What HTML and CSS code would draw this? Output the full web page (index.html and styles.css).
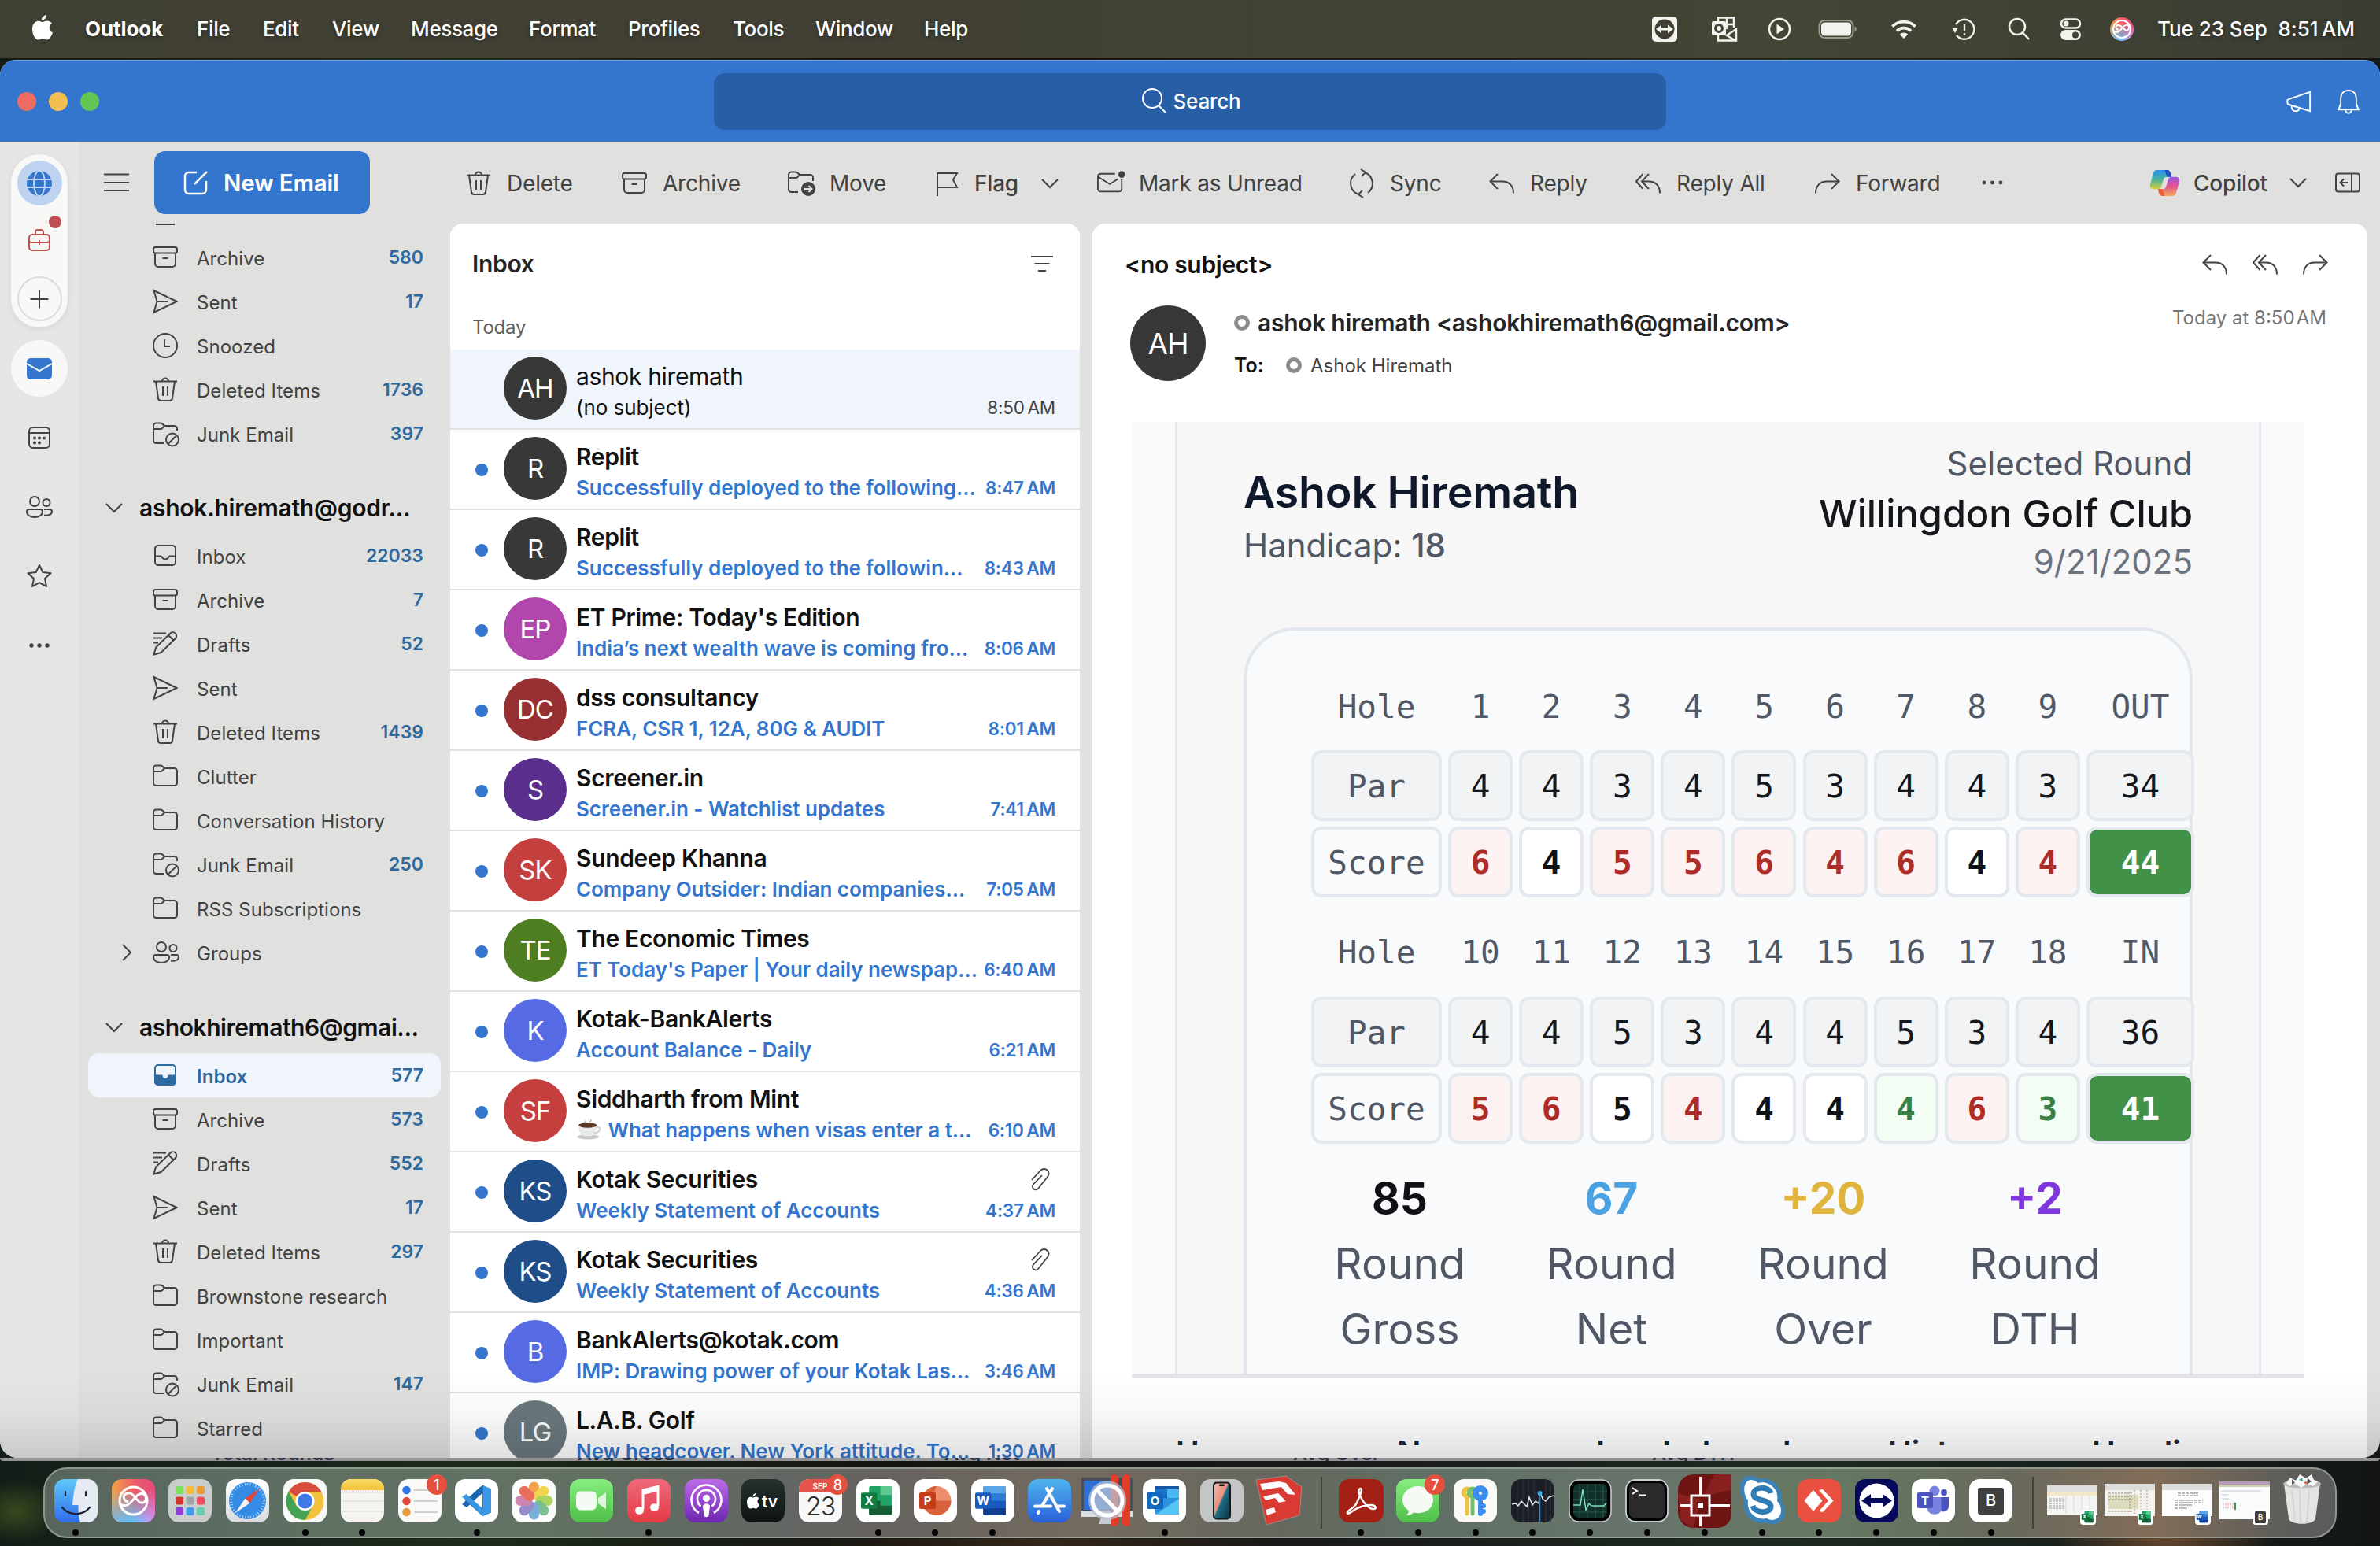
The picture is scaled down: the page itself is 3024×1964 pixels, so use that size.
FILE: index.html
```html
<!DOCTYPE html>
<html lang="en">
<head>
<meta charset="utf-8">
<title>Outlook</title>
<link rel="stylesheet" href="styles.css">
</head>
<body>
<svg class="sprite" width="0" height="0">
  <defs>
    <linearGradient id="gBlue" x1="0" y1="0" x2="0" y2="1"><stop offset="0" stop-color="#4fb5ef"/><stop offset="1" stop-color="#2a5fd8"/></linearGradient>
    <linearGradient id="gFinder" x1="0" y1="0" x2="0" y2="1"><stop offset="0" stop-color="#5fc8f7"/><stop offset="1" stop-color="#2f6df0"/></linearGradient>
    <linearGradient id="gGreen" x1="0" y1="0" x2="0" y2="1"><stop offset="0" stop-color="#86ee80"/><stop offset="1" stop-color="#4fbf48"/></linearGradient>
    <linearGradient id="gRed" x1="0" y1="0" x2="0" y2="1"><stop offset="0" stop-color="#ee6a7c"/><stop offset="1" stop-color="#e43a44"/></linearGradient>
    <linearGradient id="gPurple" x1="0" y1="0" x2="0" y2="1"><stop offset="0" stop-color="#bd6be8"/><stop offset="1" stop-color="#6d27b0"/></linearGradient>
    <linearGradient id="gDark" x1="0" y1="0" x2="0" y2="1"><stop offset="0" stop-color="#25312e"/><stop offset="1" stop-color="#0e1314"/></linearGradient>
    <linearGradient id="gYellow" x1="0" y1="0" x2="0" y2="1"><stop offset="0" stop-color="#f8dc6a"/><stop offset="1" stop-color="#f2c12e"/></linearGradient>
    <linearGradient id="gSilver" x1="0" y1="0" x2="0" y2="1"><stop offset="0" stop-color="#ffffff"/><stop offset="1" stop-color="#d8dade"/></linearGradient>
    <linearGradient id="gSiri" x1="0" y1="0" x2="1" y2="1"><stop offset="0" stop-color="#f0a23c"/><stop offset=".35" stop-color="#ea5a6c"/><stop offset=".6" stop-color="#d99ac0"/><stop offset=".8" stop-color="#79b7f4"/><stop offset="1" stop-color="#d58bf0"/></linearGradient>
    <linearGradient id="gSiriTop" x1="0" y1="0" x2="1" y2="0"><stop offset="0" stop-color="#f0a545"/><stop offset=".55" stop-color="#ec5a68"/><stop offset="1" stop-color="#e84a7c"/></linearGradient>
    <linearGradient id="gSiriBot" x1="0" y1="0" x2="1" y2="0"><stop offset="0" stop-color="#7fb4d8"/><stop offset=".5" stop-color="#62c0f4"/><stop offset="1" stop-color="#dd8ff6"/></linearGradient>
    <linearGradient id="gFade" x1="0" y1="0" x2="0" y2="1"><stop offset=".25" stop-color="#000"/><stop offset=".95" stop-color="#fff"/></linearGradient>
    <mask id="mFade" maskContentUnits="objectBoundingBox"><rect width="1" height="1" fill="url(#gFade)"/></mask>
    <linearGradient id="gPhone" x1="0" y1="0" x2="1" y2="1"><stop offset="0" stop-color="#f3b9a8"/><stop offset=".45" stop-color="#e88f7d"/><stop offset=".5" stop-color="#1d6f86"/><stop offset="1" stop-color="#0d3346"/></linearGradient>
    <linearGradient id="gCopA" x1="0" y1="0" x2="0" y2="1"><stop offset="0" stop-color="#2f8ff0"/><stop offset=".5" stop-color="#45b39a"/><stop offset="1" stop-color="#d8cf3c"/></linearGradient>
    <linearGradient id="gCopB" x1="0" y1="0" x2="0" y2="1"><stop offset="0" stop-color="#9a55e6"/><stop offset=".5" stop-color="#e2568a"/><stop offset="1" stop-color="#f5a85b"/></linearGradient>
  </defs>
  <symbol id="archive" viewBox="0 0 32 32"><rect x="1" y="3" width="30" height="7.500" rx="2.500"/><path d="M3 10.500V24a4 4 0 0 0 4 4h18a4 4 0 0 0 4-4V10.500M12.500 17h7"/></symbol>
  <symbol id="sent" viewBox="0 0 32 32"><path d="M1.500 2 30.500 16 1.500 30 5.500 16ZM5.500 16H19"/></symbol>
  <symbol id="clock" viewBox="0 0 32 32"><circle cx="16" cy="16" r="15"/><path d="M15 8v9h7"/></symbol>
  <symbol id="trash" viewBox="0 0 32 32"><path d="M1 5.500h30M12 5.500a4 4 0 0 1 8 0M4 5.500 7 27a3.500 3.500 0 0 0 3.500 3h11A3.500 3.500 0 0 0 25 27L28 5.500M13 12v12M19 12v12"/></symbol>
  <symbol id="folder" viewBox="0 0 32 32"><path d="M1 9.500V6a3.500 3.500 0 0 1 3.500-3.500H10a3 3 0 0 1 2 .8L15 6h12.500A3.500 3.500 0 0 1 31 9.500v15a3.500 3.500 0 0 1-3.500 3.500h-23A3.500 3.500 0 0 1 1 24.500ZM1 10h9a3 3 0 0 0 2-.8L15 6"/></symbol>
  <symbol id="junk" viewBox="0 0 34 34"><path d="M14 28H4.500A3.500 3.500 0 0 1 1 24.500V6a3.500 3.500 0 0 1 3.500-3.500H10a3 3 0 0 1 2 .8L15 6h12.500A3.500 3.500 0 0 1 31 9.500V12M1 10h9a3 3 0 0 0 2-.8L15 6"/><circle cx="25" cy="23.500" r="8"/><path d="m19.500 29 11-11"/></symbol>
  <symbol id="inbox" viewBox="0 0 32 32"><rect x="3" y="3" width="26" height="25" rx="4"/><path d="M3 16.500h7.500c.8 0 1 .5 1.300 1.200a4.600 4.600 0 0 0 8.400 0c.3-.7.500-1.200 1.300-1.200H29"/></symbol>
  <symbol id="inbox-fill" viewBox="0 0 32 32"><rect x="3" y="3" width="26" height="25" rx="4"/><path fill="currentColor" d="M3 16.500h8.500c.4 3 2 4.500 4.500 4.500s4.100-1.500 4.500-4.500H29V24a4 4 0 0 1-4 4H7a4 4 0 0 1-4-4Z"/></symbol>
  <symbol id="drafts" viewBox="0 0 32 32"><path d="M1 2.500h16M1 8.500h11M1 14.500h6M1.500 29.500 4 20.500 22.500 2.500a4.600 4.600 0 0 1 6.500 6.500L10.500 27ZM20 5l6.500 6.500"/></symbol>
  <symbol id="people" viewBox="0 0 34 32"><circle cx="11" cy="9" r="6"/><circle cx="26" cy="10.500" r="4.500"/><path d="M4 19h14a3 3 0 0 1 3 3c0 4-4 7-10 7S1 26 1 22a3 3 0 0 1 3-3ZM23 19h7a3 3 0 0 1 3 3c0 3.500-4.500 5.500-10 4.500"/></symbol>
  <symbol id="chev-d" viewBox="0 0 32 32"><path d="m6 11 10 10 10-10"/></symbol>
  <symbol id="chev-r" viewBox="0 0 32 32"><path d="m11 6 10 10-10 10"/></symbol>
  <symbol id="reply" viewBox="0 0 32 32"><path d="M11 4 1.500 13.500 11 23M1.500 13.500H17c9 0 14 6 14 15"/></symbol>
  <symbol id="replyall" viewBox="0 0 32 32"><path d="M9.500 4 1 13.500 9.500 23M17 4l-9 9.500 9 9.500M8 13.500h9c9 0 14 6 14 15"/></symbol>
  <symbol id="forward" viewBox="0 0 32 32"><path d="m21 4 9.500 9.500L21 23M30.500 13.500H15c-9 0-14 6-14 15"/></symbol>
  <symbol id="clip" viewBox="0 0 28 32"><path d="M3 17 14 5a6 6 0 0 1 9 8L11 28a4 4 0 0 1-6-5.500L16 11"/></symbol>
  <symbol id="globe" viewBox="0 0 32 32"><circle cx="16" cy="16" r="16" fill="#3476cd"/><g fill="none" stroke="#bdd3f0" stroke-width="2"><ellipse cx="16" cy="16" rx="7" ry="16"/><path d="M0 11h32M0 21h32"/></g></symbol>
  <symbol id="excel" viewBox="0 0 40 40"><rect x="10" y="2" width="28" height="36" rx="2" fill="#21a366"/><path d="M24 2h12a2 2 0 0 1 2 2v9H24Z" fill="#5cc78e"/><path d="M10 20h14v18H12a2 2 0 0 1-2-2ZM24 26h14v10a2 2 0 0 1-2 2H24Z" fill="#185c37"/><rect x="0" y="10" width="20" height="20" rx="2" fill="#107c41"/><text x="10" y="25.500" class="glyph">X</text></symbol>
  <symbol id="word" viewBox="0 0 40 40"><rect x="10" y="2" width="28" height="36" rx="2" fill="#2b7cd3"/><path d="M12 2h24a2 2 0 0 1 2 2v7H10V4a2 2 0 0 1 2-2Z" fill="#5aa4ea"/><path d="M10 29h28v7a2 2 0 0 1-2 2H12a2 2 0 0 1-2-2Z" fill="#103f91"/><path d="M10 20h28v9H10Z" fill="#185abd"/><rect x="0" y="10" width="20" height="20" rx="2" fill="#185abd"/><text x="10" y="25.500" class="glyph">W</text></symbol>
</svg>

<header class="menubar">
  <svg class="apple" viewBox="0 0 26 32"><path fill="#fff" d="M18 0c.3 3.600-3 7-6.200 6.800C11.500 3.600 14.700.4 18 0ZM12.800 9c1.600 0 3.400-1.600 6.200-1.600 2.400 0 4.700 1.300 6 3.300-4.800 3-4 9.800 1 11.800-1.500 4.600-4.400 9-7.500 9-2.200 0-2.900-1.300-5.400-1.300s-3.400 1.300-5.400 1.300C3.500 31.500 0 24.500 0 18 0 11.500 3.700 7.800 7.500 7.800 9.700 7.800 11.400 9 12.800 9Z"/></svg>
  <nav class="menus"><b>Outlook</b><span>File</span><span>Edit</span><span>View</span><span>Message</span><span>Format</span><span>Profiles</span><span>Tools</span><span>Window</span><span>Help</span></nav>
  <div class="status">
    <svg viewBox="0 0 32 32"><rect width="32" height="32" rx="5" fill="#f3f3ee"/><circle cx="16" cy="16" r="12.500" fill="#413f33"/><path fill="#f3f3ee" d="m5 16 7-5.500v4h8v-4l7 5.500-7 5.500v-4h-8v4Z"/></svg>
    <svg viewBox="0 0 32 32"><path fill="none" stroke="#f3f3ee" stroke-width="2.500" d="M8 6V1.500h20V14M19 1.500V16M10 10h18M8 24v6.500h23V16L19 24l12 7"/><rect y="6" width="18" height="18" rx="2" fill="#f3f3ee"/><circle cx="9" cy="15" r="4.500" fill="none" stroke="#413f33" stroke-width="3"/></svg>
    <svg viewBox="0 0 32 32"><circle cx="16" cy="16" r="13" fill="none" stroke="#f3f3ee" stroke-width="2.500"/><path fill="#f3f3ee" d="M12.500 9.500 22 16l-9.500 6.500Z"/></svg>
    <svg class="batt" viewBox="0 0 50 32"><rect x="1.500" y="5" width="43" height="22" rx="7" fill="none" stroke="#9a9a90" stroke-width="2"/><rect x="4" y="7.500" width="38" height="17" rx="4.500" fill="#f3f3ee"/><path d="M46.500 12.500c3 1 3 6 0 7Z" fill="#9a9a90"/></svg>
    <svg class="wifi" viewBox="0 0 36 32"><g fill="none" stroke="#f3f3ee" stroke-width="4"><path d="M2.500 12.500a22 22 0 0 1 31 0M8.500 18.500a13.500 13.500 0 0 1 19 0"/></g><path fill="#f3f3ee" d="M18 29l-5.500-6a7.800 7.800 0 0 1 11 0Z"/></svg>
    <svg viewBox="0 0 32 32"><path fill="none" stroke="#f3f3ee" stroke-width="2.300" d="M6 10A12.500 12.500 0 1 1 7 24M17 10v8.500M17 21v2.500"/><path fill="#f3f3ee" d="m1 14 8 0-4 7Z"/></svg>
    <svg viewBox="0 0 32 32"><g fill="none" stroke="#f3f3ee" stroke-width="2.500"><circle cx="14" cy="13" r="10"/><path d="m21 20.500 8 8.500"/></g></svg>
    <svg viewBox="0 0 32 32"><rect x="4" y="3.500" width="24" height="11" rx="5.500" fill="none" stroke="#f3f3ee" stroke-width="2.500"/><circle cx="10" cy="9" r="3.500" fill="#f3f3ee"/><rect x="3" y="17" width="26" height="13" rx="6.500" fill="#f3f3ee"/><circle cx="22" cy="23.500" r="4" fill="#413f33"/></svg>
    <svg viewBox="0 0 32 32"><circle cx="16" cy="16" r="15" fill="url(#gSiriTop)"/><circle cx="16" cy="16" r="15" fill="url(#gSiriBot)" mask="url(#mFade)"/><g fill="none" stroke="#fff" stroke-width="2"><circle cx="16" cy="16" r="11"/><path d="M6 19c5 3 8-1 11-5s7-4 8-1-2 6-5 4-5-7-9-6-3 5 1 6"/></g></svg>
  </div>
  <time>Tue 23 Sep&nbsp; 8:51&thinsp;AM</time>
</header>

<main class="window">
  <div class="titlebar">
    <div class="lights"><i></i><i></i><i></i></div>
    <div class="search"><svg viewBox="0 0 32 32"><circle cx="14" cy="13" r="12"/><path d="m22 22 9 9"/></svg>Search</div>
    <div class="tb-icons">
      <svg viewBox="0 0 34 32"><path d="M32 3v26L3 20a2 2 0 0 1-1.500-2v-3A2 2 0 0 1 3 13ZM7 21.500c0 5 2 7.500 5.500 7.500s5-2 5.500-4.500"/></svg>
      <svg viewBox="0 0 32 34"><path d="M16 2C9 2 5.500 7 5.500 13v7L2.500 28h27l-3-8v-7C26.500 7 23 2 16 2ZM12 28.500c0 5.500 8 5.500 8 0"/></svg>
    </div>
  </div>

  <aside class="rail">
    <div class="pill">
      <div class="acct on"><svg class="globe"><use href="#globe"/></svg></div>
      <div class="acct work"><svg class="ic" viewBox="0 0 32 32"><rect x="3" y="9" width="26" height="20" rx="4"/><path d="M11 9V6a3 3 0 0 1 3-3h4a3 3 0 0 1 3 3v3M3 16c0 2 1 3 3 3h20c2 0 3-1 3-3M16 16v6"/></svg><i></i></div>
      <div class="acct plus"><svg class="ic" viewBox="0 0 32 32"><path d="M16 4.500v23M4.500 16h23"/></svg></div>
    </div>
    <div class="app on"><svg class="mailic" viewBox="0 0 32 28"><rect width="32" height="27" rx="5" fill="#3476cd"/><path d="m0 7 16 9 16-9" fill="none" stroke="#f8f8f6" stroke-width="2"/></svg></div>
    <div class="app"><svg class="ic" viewBox="0 0 32 32"><rect x="3" y="3" width="26" height="26" rx="5"/><path d="M3 10h26"/><g class="solid"><circle cx="10" cy="16.500" r="2"/><circle cx="16" cy="16.500" r="2"/><circle cx="22" cy="16.500" r="2"/><circle cx="10" cy="22.500" r="2"/><circle cx="16" cy="22.500" r="2"/></g></svg></div>
    <div class="app"><svg class="ic ppl"><use href="#people"/></svg></div>
    <div class="app"><svg class="ic" viewBox="0 0 32 32"><path stroke-linejoin="round" d="m16 2 4.300 9 10.200 1.200-7.500 6.900 2 9.900-9-4.800L7 29l2-9.900-7.500-6.900L11.700 11Z"/></svg></div>
    <div class="app"><svg class="ic" viewBox="0 0 32 32"><g class="solid"><circle cx="6" cy="16" r="2.700"/><circle cx="16" cy="16" r="2.700"/><circle cx="26" cy="16" r="2.700"/></g></svg></div>
  </aside>

  <div class="toolbar">
    <svg class="ic" viewBox="0 0 32 32"><path d="M0 5.500h32M0 16h32M0 26h32"/></svg>
    <button class="new"><svg class="ic" viewBox="0 0 32 32"><path d="M17 3H7a5 5 0 0 0-5 5v17a5 5 0 0 0 5 5h17a5 5 0 0 0 5-5V14M14 18 30 2"/></svg>New Email</button>
    <span class="cmd"><svg class="ic"><use href="#trash"/></svg><em>Delete</em></span>
    <span class="cmd"><svg class="ic"><use href="#archive"/></svg><em>Archive</em></span>
    <span class="cmd"><svg class="ic wide" viewBox="0 0 36 34"><path d="M13 28H4.500A3.500 3.500 0 0 1 1 24.500V6a3.500 3.500 0 0 1 3.500-3.500H10a3 3 0 0 1 2 .8L15 6h13.500A3.500 3.500 0 0 1 32 9.500V14M1 10h9a3 3 0 0 0 2-.8L15 6"/><circle class="solid" cx="26" cy="24" r="9"/><path stroke="#e0e0df" d="M21 24h9M26.500 20l4 4-4 4"/></svg><em>Move</em></span>
    <span class="cmd flag"><svg class="ic" viewBox="0 0 32 32"><path d="M2 32V3h25l-5 8.500 5 9.500H2"/></svg><em>Flag</em><svg class="ic chev"><use href="#chev-d"/></svg></span>
    <span class="cmd"><svg class="ic wide" viewBox="0 0 38 34"><path d="M24 4H5a4 4 0 0 0-4 4v16a4 4 0 0 0 4 4h24a4 4 0 0 0 4-4V11M1 8l16 10L28 11"/><circle class="solid" cx="33" cy="5" r="4.500"/></svg><em>Mark as Unread</em></span>
    <span class="cmd"><svg class="ic sync" viewBox="0 0 32 38"><path d="M20 5a15 15 0 0 1 4 26M12 33A15 15 0 0 1 8 7M15 1l6 4-5 5M17 28l-5 5 6 4"/></svg><em>Sync</em></span>
    <span class="cmd"><svg class="ic"><use href="#reply"/></svg><em>Reply</em></span>
    <span class="cmd"><svg class="ic"><use href="#replyall"/></svg><em>Reply All</em></span>
    <span class="cmd"><svg class="ic"><use href="#forward"/></svg><em>Forward</em></span>
    <svg class="ic" viewBox="0 0 32 32"><g class="solid"><circle cx="5" cy="16" r="2.400"/><circle cx="15.500" cy="16" r="2.400"/><circle cx="26" cy="16" r="2.400"/></g></svg>
    <span class="cmd cop"><svg class="copilot" viewBox="0 0 38 34"><path d="M9 0h12c3 0 4.500 2 5.500 6l1 3h-6c-3 0-4 2-5 6l-2 7c-.8 2-2 3-4.500 3H5c-4 0-6-2.500-5-6.500L4 4C5 1 6.500 0 9 0Z" fill="url(#gCopA)"/><path d="M19 0h3c3 0 4 2 5 5l1 4h-6Z" fill="#1d4fc0"/><path d="M29 34H17c-3 0-4.500-2-5.500-6l-1-3h6c3 0 4-2 5-6l2-7c.8-2 2-3 4.500-3H33c4 0 6 2.500 5 6.500L34 30c-1 3-2.500 4-5 4Z" fill="url(#gCopB)"/><path d="M19 34h-3c-3 0-4-2-5-5l-1-4h6Z" fill="#e8613c"/></svg><em>Copilot</em></span>
    <svg class="ic"><use href="#chev-d"/></svg>
    <svg class="ic" viewBox="0 0 32 32"><rect x="1" y="4.500" width="30" height="23" rx="3"/><path d="M21 4.500v23M16 16H7M11 11.500 6.500 16l4.500 4.500"/></svg>
  </div>

  <nav class="folders">
    <div class="cut"></div>
    <a><svg class="ic"><use href="#archive"/></svg><span>Archive</span><b>580</b></a>
    <a><svg class="ic"><use href="#sent"/></svg><span>Sent</span><b>17</b></a>
    <a><svg class="ic"><use href="#clock"/></svg><span>Snoozed</span></a>
    <a><svg class="ic"><use href="#trash"/></svg><span>Deleted Items</span><b>1736</b></a>
    <a><svg class="ic j"><use href="#junk"/></svg><span>Junk Email</span><b>397</b></a>
    <h3><svg class="ic"><use href="#chev-d"/></svg>ashok.hiremath@godr...</h3>
    <a><svg class="ic"><use href="#inbox"/></svg><span>Inbox</span><b>22033</b></a>
    <a><svg class="ic"><use href="#archive"/></svg><span>Archive</span><b>7</b></a>
    <a><svg class="ic"><use href="#drafts"/></svg><span>Drafts</span><b>52</b></a>
    <a><svg class="ic"><use href="#sent"/></svg><span>Sent</span></a>
    <a><svg class="ic"><use href="#trash"/></svg><span>Deleted Items</span><b>1439</b></a>
    <a><svg class="ic"><use href="#folder"/></svg><span>Clutter</span></a>
    <a><svg class="ic"><use href="#folder"/></svg><span>Conversation History</span></a>
    <a><svg class="ic j"><use href="#junk"/></svg><span>Junk Email</span><b>250</b></a>
    <a><svg class="ic"><use href="#folder"/></svg><span>RSS Subscriptions</span></a>
    <a class="group"><svg class="ic"><use href="#chev-r"/></svg><svg class="ic"><use href="#people"/></svg><span>Groups</span></a>
    <h3 class="second"><svg class="ic"><use href="#chev-d"/></svg>ashokhiremath6@gmai...</h3>
    <a class="sel"><svg class="ic"><use href="#inbox-fill"/></svg><span>Inbox</span><b>577</b></a>
    <a><svg class="ic"><use href="#archive"/></svg><span>Archive</span><b>573</b></a>
    <a><svg class="ic"><use href="#drafts"/></svg><span>Drafts</span><b>552</b></a>
    <a><svg class="ic"><use href="#sent"/></svg><span>Sent</span><b>17</b></a>
    <a><svg class="ic"><use href="#trash"/></svg><span>Deleted Items</span><b>297</b></a>
    <a><svg class="ic"><use href="#folder"/></svg><span>Brownstone research</span></a>
    <a><svg class="ic"><use href="#folder"/></svg><span>Important</span></a>
    <a><svg class="ic j"><use href="#junk"/></svg><span>Junk Email</span><b>147</b></a>
    <a><svg class="ic"><use href="#folder"/></svg><span>Starred</span></a>
  </nav>

  <section class="list">
    <header><h2>Inbox</h2><svg class="ic" viewBox="0 0 32 32"><path d="M2 7h28M6.500 16h19M11 25h10"/></svg></header>
    <p class="day">Today</p>
    <article class="read"><div class="av dark">AH</div><h4>ashok hiremath</h4><p>(no subject)</p><time>8:50&thinsp;AM</time></article>
    <article><i></i><div class="av dark">R</div><h4>Replit</h4><p>Successfully deployed to the following...</p><time>8:47&thinsp;AM</time></article>
    <article><i></i><div class="av dark">R</div><h4>Replit</h4><p>Successfully deployed to the followin...</p><time>8:43&thinsp;AM</time></article>
    <article><i></i><div class="av pink">EP</div><h4>ET Prime: Today's Edition</h4><p>India’s next wealth wave is coming fro...</p><time>8:06&thinsp;AM</time></article>
    <article><i></i><div class="av maroon">DC</div><h4>dss consultancy</h4><p>FCRA, CSR 1, 12A, 80G &amp; AUDIT</p><time>8:01&thinsp;AM</time></article>
    <article><i></i><div class="av violet">S</div><h4>Screener.in</h4><p>Screener.in - Watchlist updates</p><time>7:41&thinsp;AM</time></article>
    <article><i></i><div class="av red">SK</div><h4>Sundeep Khanna</h4><p>Company Outsider: Indian companies...</p><time>7:05&thinsp;AM</time></article>
    <article><i></i><div class="av green">TE</div><h4>The Economic Times</h4><p>ET Today's Paper | Your daily newspap...</p><time>6:40&thinsp;AM</time></article>
    <article><i></i><div class="av indigo">K</div><h4>Kotak-BankAlerts</h4><p>Account Balance - Daily</p><time>6:21&thinsp;AM</time></article>
    <article><i></i><div class="av red">SF</div><h4>Siddharth from Mint</h4><p><svg class="cup" viewBox="0 0 36 28"><ellipse cx="16" cy="24" rx="15" ry="3.500" fill="#c9c9c9"/><path d="M3 8h25c0 9-4 15-9 15h-7C7 23 3 17 3 8Z" fill="#e9e9e9"/><path d="M27 11c7-2 8 6-3 8" fill="none" stroke="#d5d5d5" stroke-width="2.500"/><ellipse cx="15.500" cy="8" rx="12.500" ry="3.500" fill="#5b3a26"/><path d="M11 5c0-2 3-2 2-5M18 5c0-2 3-2 2-5" fill="none" stroke="#b5b5b5" stroke-width="1.500"/></svg> What happens when visas enter a t...</p><time>6:10&thinsp;AM</time></article>
    <article><i></i><div class="av navy">KS</div><h4>Kotak Securities</h4><svg class="ic clip"><use href="#clip"/></svg><p>Weekly Statement of Accounts</p><time>4:37&thinsp;AM</time></article>
    <article><i></i><div class="av navy">KS</div><h4>Kotak Securities</h4><svg class="ic clip"><use href="#clip"/></svg><p>Weekly Statement of Accounts</p><time>4:36&thinsp;AM</time></article>
    <article><i></i><div class="av indigo">B</div><h4>BankAlerts@kotak.com</h4><p>IMP: Drawing power of your Kotak Las...</p><time>3:46&thinsp;AM</time></article>
    <article><i></i><div class="av grey">LG</div><h4>L.A.B. Golf</h4><p>New headcover. New York attitude. To...</p><time>1:30&thinsp;AM</time></article>
  </section>

  <section class="reader">
    <header class="subj"><h2>&lt;no subject&gt;</h2><svg class="ic"><use href="#reply"/></svg><svg class="ic"><use href="#replyall"/></svg><svg class="ic"><use href="#forward"/></svg></header>
    <div class="meta">
      <div class="av dark big">AH</div>
      <div class="who">
        <div class="from"><i></i>ashok hiremath &lt;ashokhiremath6@gmail.com&gt;</div>
        <div class="to"><b>To:</b><i></i>Ashok Hiremath</div>
      </div>
      <time>Today at 8:50&hairsp;AM</time>
    </div>
    <div class="shot">
      <div class="page">
        <div class="player">
          <div><h1>Ashok Hiremath</h1><p>Handicap: <b>18</b></p></div>
          <div class="round"><p>Selected Round</p><h5>Willingdon Golf Club</h5><p class="date">9/21/2025</p></div>
        </div>
        <div class="card">
          <div class="row hole"><span>Hole</span><span>1</span><span>2</span><span>3</span><span>4</span><span>5</span><span>6</span><span>7</span><span>8</span><span>9</span><span>OUT</span></div>
          <div class="row par"><span>Par</span><span>4</span><span>4</span><span>3</span><span>4</span><span>5</span><span>3</span><span>4</span><span>4</span><span>3</span><span>34</span></div>
          <div class="row score"><span>Score</span><span class="o">6</span><span>4</span><span class="o">5</span><span class="o">5</span><span class="o">6</span><span class="o">4</span><span class="o">6</span><span>4</span><span class="o">4</span><span class="t">44</span></div>
          <div class="row hole two"><span>Hole</span><span>10</span><span>11</span><span>12</span><span>13</span><span>14</span><span>15</span><span>16</span><span>17</span><span>18</span><span>IN</span></div>
          <div class="row par"><span>Par</span><span>4</span><span>4</span><span>5</span><span>3</span><span>4</span><span>4</span><span>5</span><span>3</span><span>4</span><span>36</span></div>
          <div class="row score"><span>Score</span><span class="o">5</span><span class="o">6</span><span>5</span><span class="o">4</span><span>4</span><span>4</span><span class="u">4</span><span class="o">6</span><span class="u">3</span><span class="t">41</span></div>
          <div class="stats">
            <div><b>85</b>Round<br>Gross</div><div class="net"><b>67</b>Round<br>Net</div><div class="over"><b>+20</b>Round<br>Over</div><div class="dth"><b>+2</b>Round<br>DTH</div>
          </div>
        </div>
      </div>
    </div>
    <div class="tabs"><span>Home</span><span>New</span><span>Leaderboard</span><span>History</span><span>Handicap</span></div>
  </section>
</main>

<div class="behind"><span>Total Rounds</span><span>Avg Gross</span><span>Avg Net</span><span>Avg Over</span><span>Avg DTH</span></div>

<footer class="dock">
  <div class="apps">
    <div class="run"><svg viewBox="0 0 55 55"><rect width="55" height="55" rx="13" fill="url(#gFinder)"/><path d="M30 0h12a13 13 0 0 1 13 13v29a13 13 0 0 1-13 13H33c-2-6-2.500-12-2.500-22H23C24 20 26 8 30 0Z" fill="#e6ebf3"/><path d="M14 16v5M40 16v5M10 36c9 11 26 11 35 0" fill="none" stroke="#1a2233" stroke-width="2.200" stroke-linecap="round"/></svg></div>
    <div><svg viewBox="0 0 55 55"><rect width="55" height="55" rx="13" fill="url(#gSiriTop)"/><rect width="55" height="55" rx="13" fill="url(#gSiriBot)" mask="url(#mFade)"/><g fill="none" stroke="#fff" stroke-width="3"><circle cx="27.500" cy="27.500" r="17.500"/><path d="M11 32c8 5 13-2 18-8s12-8 14-2-3 10-8 7-8-13-15-11-6 9 1 11"/></g></svg></div>
    <div><svg viewBox="0 0 55 55"><rect width="55" height="55" rx="13" fill="#c9cdcb"/><g><rect x="9" y="9" width="10" height="10" rx="2.500" fill="#7be05a"/><rect x="22.500" y="9" width="10" height="10" rx="2.500" fill="#f5bb3b"/><rect x="36" y="9" width="10" height="10" rx="2.500" fill="#ea9a35"/><rect x="9" y="22.500" width="10" height="10" rx="2.500" fill="#d2352b"/><rect x="22.500" y="22.500" width="10" height="10" rx="2.500" fill="#9aa5a8"/><rect x="36" y="22.500" width="10" height="10" rx="2.500" fill="#ec4b62"/><rect x="9" y="36" width="10" height="10" rx="2.500" fill="#8c3fd0"/><rect x="22.500" y="36" width="10" height="10" rx="2.500" fill="#3d9cf0"/><rect x="36" y="36" width="10" height="10" rx="2.500" fill="#62cfae"/></g></svg></div>
    <div><svg viewBox="0 0 55 55"><rect width="55" height="55" rx="13" fill="url(#gSilver)"/><circle cx="27.500" cy="27.500" r="23.500" fill="#338be6"/><circle cx="27.500" cy="27.500" r="21" fill="none" stroke="#b9dcfa" stroke-width="3" stroke-dasharray="1 2.500"/><path d="M43 12 30.500 30.500l-6-6Z" fill="#e8443a"/><path d="m12 43 12.500-18.500 6 6Z" fill="#f4f4f4"/></svg></div>
    <div class="run"><svg viewBox="0 0 55 55"><rect width="55" height="55" rx="13" fill="#f8f8f8"/><circle cx="27.500" cy="28" r="24" fill="#f4c13c"/><path d="M27.500 28 6.700 16A24 24 0 0 1 48.300 16H27.500Z" fill="#d94b3c"/><path d="M6.700 16A24 24 0 0 0 27.500 52l10-18-20.500.500Z" fill="#43a352"/><circle cx="27.500" cy="28" r="12" fill="#fff"/><circle cx="27.500" cy="28" r="9.500" fill="#3f7be8"/></svg></div>
    <div class="run"><svg viewBox="0 0 55 55"><rect width="55" height="55" rx="13" fill="#f5f4f1"/><path d="M0 14V13A13 13 0 0 1 13 0h29a13 13 0 0 1 13 13v1Z" fill="url(#gYellow)"/><path d="M1 28h53M1 41h53" stroke="#d9d8d4" stroke-width="1.200"/><path d="M1 16.500h53" stroke="#a9a79f" stroke-width="1.500" stroke-dasharray="1.500 1.500"/></svg></div>
    <div><svg viewBox="0 0 55 55"><rect width="55" height="55" rx="13" fill="#faf9f8"/><g stroke="#c4c4c6" stroke-width="1.500"><path d="M20 14h30M20 28h30M20 42h30"/></g><g fill="none" stroke-width="1.500"><circle cx="10.500" cy="14" r="4.500" fill="#2d74e8" stroke="#2d74e8"/><circle cx="10.500" cy="28" r="4.500" fill="#e04a3e" stroke="#e04a3e"/><circle cx="10.500" cy="42" r="4.500" fill="#e69a38" stroke="#e69a38"/></g></svg><b class="badge">1</b></div>
    <div class="run"><svg viewBox="0 0 55 55"><rect width="55" height="55" rx="13" fill="#fff"/><path d="m35 8 11 4.500v30L35 47 13 27Z" fill="#2d7fd0"/><path d="m36 17-21 19-6-4L32 10l4-2Z" fill="#1c66b0"/><path d="M9 22.500 14.500 19 36 38v9Z" fill="#3a96e2"/><path d="M35 18v19L24 27.500Z" fill="#fff"/><path d="M36 8v39l10-4.500v-30Z" fill="#3c97e6"/></svg></div>
    <div><svg viewBox="0 0 55 55"><rect width="55" height="55" rx="13" fill="#fcfcfc"/><g opacity=".9"><rect x="21" y="3.500" width="13" height="22" rx="6.500" fill="#f09a38"/><rect x="21" y="3.500" width="13" height="22" rx="6.500" fill="#f2d240" transform="rotate(45 27.500 27.500)"/><rect x="21" y="3.500" width="13" height="22" rx="6.500" fill="#a5cf50" transform="rotate(90 27.500 27.500)"/><rect x="21" y="3.500" width="13" height="22" rx="6.500" fill="#6dba85" transform="rotate(135 27.500 27.500)"/><rect x="21" y="3.500" width="13" height="22" rx="6.500" fill="#6aa6d6" transform="rotate(180 27.500 27.500)"/><rect x="21" y="3.500" width="13" height="22" rx="6.500" fill="#8c80c4" transform="rotate(225 27.500 27.500)"/><rect x="21" y="3.500" width="13" height="22" rx="6.500" fill="#c879a8" transform="rotate(270 27.500 27.500)"/><rect x="21" y="3.500" width="13" height="22" rx="6.500" fill="#e8604c" transform="rotate(315 27.500 27.500)"/></g></svg></div>
    <div><svg viewBox="0 0 55 55"><rect width="55" height="55" rx="13" fill="url(#gGreen)"/><rect x="8" y="15.500" width="26" height="24" rx="6" fill="#f4fbf3"/><path d="m36 24 10-7v21l-10-7Z" fill="#e3f4e1"/></svg></div>
    <div class="run"><svg viewBox="0 0 55 55"><rect width="55" height="55" rx="13" fill="url(#gRed)"/><path d="M20 38V14l19-4.500V34" fill="none" stroke="#fff" stroke-width="3"/><path d="M20 13.500 39 9v6.500L20 20Z" fill="#fff"/><ellipse cx="15.500" cy="40" rx="5.500" ry="4.800" fill="#fff"/><ellipse cx="34.500" cy="36" rx="5.500" ry="4.800" fill="#fff"/></svg></div>
    <div><svg viewBox="0 0 55 55"><rect width="55" height="55" rx="13" fill="url(#gPurple)"/><g fill="none" stroke="#fff" stroke-width="2.600"><path d="M18 43a19 19 0 1 1 19 0M20.500 34.500a11.500 11.500 0 1 1 14 0"/></g><circle cx="27.500" cy="24.500" r="4.500" fill="#fff"/><path d="M23 35c0-5 9-5 9 0l-1.500 11c-.5 3-5.500 3-6 0Z" fill="#fff"/></svg></div>
    <div><svg viewBox="0 0 55 55"><rect width="55" height="55" rx="13" fill="url(#gDark)"/><path transform="translate(7 18) scale(.62)" fill="#fff" d="M18 0c.3 3.600-3 7-6.200 6.800C11.500 3.600 14.700.4 18 0ZM12.800 9c1.600 0 3.400-1.600 6.200-1.600 2.400 0 4.700 1.300 6 3.300-4.800 3-4 9.800 1 11.800-1.500 4.600-4.400 9-7.500 9-2.200 0-2.900-1.300-5.400-1.300s-3.400 1.300-5.400 1.300C3.500 31.500 0 24.500 0 18 0 11.500 3.700 7.800 7.500 7.800 9.700 7.800 11.400 9 12.800 9Z"/><text x="36" y="36" class="tv">tv</text></svg></div>
    <div class="cal"><svg viewBox="0 0 55 55"><rect width="55" height="55" rx="13" fill="#f8f8f8"/><path d="M0 17V13A13 13 0 0 1 13 0h29a13 13 0 0 1 13 13v4Z" fill="#e5544c"/><text x="27" y="13" class="mon">SEP</text><text x="27.500" y="46" class="num">23</text></svg><b class="badge">8</b></div>
    <div class="run"><svg viewBox="0 0 55 55"><rect width="55" height="55" rx="13" fill="#fff"/><use href="#excel" x="6" y="7" width="41" height="41"/></svg></div>
    <div class="run"><svg viewBox="0 0 55 55"><rect width="55" height="55" rx="13" fill="#fff"/><circle cx="29" cy="27.500" r="18.500" fill="#ee8d6d"/><path d="M29 9a18.500 18.500 0 0 0 0 18.500h18.500A18.500 18.500 0 0 1 10.500 27.500 18.500 18.500 0 0 1 29 9Z" fill="#d9623d"/><rect x="7" y="17" width="21" height="21" rx="2" fill="#c43e1c"/><text x="17.500" y="33" class="glyph">P</text></svg></div>
    <div class="run"><svg viewBox="0 0 55 55"><rect width="55" height="55" rx="13" fill="#fff"/><use href="#word" x="5" y="7" width="41" height="41"/></svg></div>
    <div><svg viewBox="0 0 55 55"><rect width="55" height="55" rx="13" fill="url(#gBlue)"/><g stroke="#fff" stroke-width="4" stroke-linecap="round"><path d="M24 12 40 41M31 12 18 34M9 34.500h20M38 34.500h8M14 41l-1 2"/></g></svg></div>
    <div><svg class="vm" viewBox="0 0 67 67"><path d="M1 4h65v50H1Z" fill="#4a4e55"/><path d="M4 8h42v37H4Z" fill="#2f6fd6"/><path d="M1 46h65v8H1Z" fill="#d9dce0"/><path d="M26 54h14l3 9H23Z" fill="#c7cacf"/><rect x="38" width="10" height="66" rx="5" fill="#e33c28"/><rect x="53" width="10" height="66" rx="5" fill="#e33c28"/><ellipse cx="34" cy="33" rx="24" ry="25" fill="#b9c2d2" opacity=".75"/><circle cx="34" cy="33" r="19" fill="none" stroke="#fff" stroke-width="5"/><path d="m21 20 26 27" stroke="#fff" stroke-width="5"/></svg></div>
    <div class="run"><svg viewBox="0 0 55 55"><rect width="55" height="55" rx="13" fill="#fff"/><rect x="16" y="9" width="30" height="22" fill="#1558a6"/><path d="M16 13h15v10H16Z" fill="#1a74c9"/><path d="M31 13h15v18H31Z" fill="#4ab9f2"/><path d="M16 24h30v21H18a2 2 0 0 1-2-2Z" fill="#2b93de"/><path d="m16 45 30-20v18a2 2 0 0 1-2 2Z" fill="#56c4f5"/><rect x="5" y="17" width="21" height="21" rx="2" fill="#1268bd"/><text x="15.500" y="33" class="glyph">O</text></svg></div>
    <div><svg viewBox="0 0 55 55"><rect width="55" height="55" rx="13" fill="#c4c5c6"/><rect x="16" y="3.500" width="23" height="48" rx="5" fill="#16181b"/><rect x="18" y="5.500" width="19" height="44" rx="3.500" fill="url(#gPhone)"/><rect x="24" y="6.500" width="7" height="2.500" rx="1.200" fill="#111"/></svg></div>
    <div><svg class="su" viewBox="0 0 60 62"><path d="m1 5 38-5 20 14-3 36-42 12Z" fill="#d93a34" stroke="#9c8f80"/><path d="m6 10 24-3 9 2 12 15-10-1-8-9-24 4ZM10 26l19-4 10 10-9 2-5-6-12 3ZM13 43l11-3 2 6-11 4Z" fill="#fff"/></svg></div>
  </div>
  <hr>
  <div class="apps">
    <div class="run"><svg viewBox="0 0 55 55"><rect width="57" height="55" rx="13" fill="#a32015"/><path d="M28 12c-4 0-3 6 1 13s10 13 15 13 3-5-3-5c-8 0-17 3-24 8-4 3-7 4-6 1s9-5 12-12 8-18 5-18Z" fill="none" stroke="#fff" stroke-width="2.500"/></svg></div>
    <div class="run"><svg viewBox="0 0 55 55"><rect width="55" height="55" rx="13" fill="url(#gGreen)"/><path d="M27.500 9C17 9 8 16.500 8 26.500c0 6 3 10.500 8 13.500 0 2-1 4-3 6 4 0 7-1.500 9-3.500 14 3 25-4.500 25-16C47 16.500 38 9 27.500 9Z" fill="#f5faf4"/></svg><b class="badge">7</b></div>
    <div class="run"><svg viewBox="0 0 55 55"><rect width="55" height="55" rx="13" fill="#fbfaf9"/><g stroke-linecap="round" fill="none"><g stroke="#f1c344"><circle cx="17" cy="17" r="4.500" stroke-width="6"/><path d="M17 22v22" stroke-width="5"/></g><g stroke="#74c26c"><circle cx="24" cy="17" r="4.500" stroke-width="6"/><path d="M24 22v22" stroke-width="5"/></g><g stroke="#3b8df0"><circle cx="34" cy="18" r="6" stroke-width="8"/><path d="M34 26v18M36 34h2M36 41h2" stroke-width="6"/></g></g></svg></div>
    <div class="run"><svg viewBox="0 0 55 55"><rect width="55" height="55" rx="13" fill="#1b1e26"/><g stroke="#31353f" stroke-width="1"><path d="M8 0v55M15 0v55M22 0v55M29 0v55M44 0v55M50 0v55"/></g><path d="m1 32 5-1 3 3 4-6 3 3 4 4 3-12 4 10 4-5 4 3 2-14 3 8 4 3 4-5 6-2" fill="none" stroke="#e2e4e8" stroke-width="1.500"/><path d="M36.500 18v36" stroke="#3d86b8" stroke-width="1.500"/><circle cx="36.500" cy="18" r="3" fill="#45a7e6"/></svg></div>
    <div class="run"><svg viewBox="0 0 55 55"><rect x="1" y="1" width="53" height="53" rx="12" fill="#142220" stroke="#c9cecd" stroke-width="1.500"/><rect x="4" y="4" width="47" height="47" rx="9" fill="#11302a" stroke="#000" stroke-width="4"/><g stroke="#2a5a4e" stroke-width="1"><path d="M14 6v43M24 6v43M34 6v43M44 6v43M6 16h43M6 26h43M6 42h43"/></g><path d="M6 33h9l3-20 4 26 4-8 3 3h16l3-4" fill="none" stroke="#7ee0bd" stroke-width="1.500"/></svg></div>
    <div class="run"><svg viewBox="0 0 55 55"><rect x="1" y="1" width="53" height="53" rx="12" fill="#000" stroke="#c9d0d4" stroke-width="1.800"/><rect x="5" y="5" width="45" height="45" rx="8" fill="#2a2a2c"/><path d="m9 11 6 4-6 4M18 20.500h9" fill="none" stroke="#fff" stroke-width="2"/></svg></div>
    <div class="run"><svg class="cad" viewBox="0 0 68 68"><path d="M20 0h48v50a18 18 0 0 1-18 18H20A20 20 0 0 1 0 48V20A20 20 0 0 1 20 0Z" fill="#6e1413"/><path d="m0 24 30 8L46 0h22v20L30 28 20 68 3 58Z" fill="#87201e"/><g fill="none" stroke="#fff" stroke-width="3"><rect x="17" y="27" width="23" height="25"/><path d="M28.500 3v24M28.500 52v14M3 39.500h14M40 39.500h26"/></g><rect x="25" y="36" width="7" height="7" fill="#fff"/></svg></div>
    <div class="run"><svg class="sk" viewBox="0 0 60 62"><path d="M14 0c5 0 8 1 11 4 17-4 32 10 29 28 3 4 5 8 5 13 0 13-13 20-24 14C18 63 4 48 7 31-3 16 3 0 14 0Z" fill="#3a83bb"/><path d="M15 5c4 0 7 1 9 4 15-4 28 8 25 23 3 3 5 7 5 12 0 10-10 15-18 10C21 57 10 45 12 31 4 20 7 6 15 5Z" fill="#fff"/><path d="M41 22c-2-9-22-9-22 1 0 10 22 6 22 16 0 9-20 9-23-1" fill="none" stroke="#2f7cb6" stroke-width="7"/></svg></div>
    <div class="run"><svg viewBox="0 0 55 55"><rect width="55" height="55" rx="13" fill="#e9503f"/><path d="m20 14 11.500 13.500L20 41 8.500 27.500Z" fill="#fff"/><path d="m27 14 5-1 13.500 14.500L32 42l-5-1 12-13.500Z" fill="#fff"/></svg></div>
    <div class="run"><svg viewBox="0 0 55 55"><rect width="55" height="55" rx="13" fill="#06095a"/><circle cx="27.500" cy="27.500" r="22" fill="#fff"/><path d="m8 27.500 12-8.500v5h15v-5l12 8.500L35 36v-5H20v5Z" fill="#06095a"/></svg></div>
    <div class="run"><svg viewBox="0 0 55 55"><rect width="55" height="55" rx="13" fill="#fff"/><circle cx="29" cy="15" r="6.500" fill="#7a82e0"/><circle cx="41" cy="17" r="4" fill="#4a52bd"/><path d="M19 23h20v12c0 13-20 13-20 0Z" fill="#7a82e0"/><path d="M37 23h10v11c0 6-5 8-9 7Z" fill="#4a52bd"/><rect x="7" y="17" width="20" height="20" rx="2" fill="#4b53bc"/><text x="17" y="32.500" class="glyph">T</text></svg></div>
    <div class="run"><svg viewBox="0 0 55 55"><rect width="55" height="55" rx="13" fill="#fff"/><rect x="11" y="11" width="33" height="34" rx="3" fill="#3f3f40"/><text x="27.500" y="34" class="glyph bb">B</text></svg></div>
  </div>
  <hr>
  <div class="apps minis">
    <div><svg viewBox="0 0 64 55"><rect y="8" width="64" height="38" fill="#f4f4f2"/><rect y="8" width="64" height="9" fill="#dedfdc"/><rect y="17" width="64" height="4" fill="#f3e9c4"/><g stroke="#9a9a98" stroke-width="1.200" stroke-dasharray="3 1"><path d="M3 25h18M3 28h18M3 31h18M3 34h18M3 37h18"/></g><path d="M24 21v22M34 21v22M44 21v22M54 21v22" stroke="#d8d8d8"/><rect x="42" y="39" width="20" height="19" rx="4" fill="#fff"/><use href="#excel" x="43.500" y="40" width="16" height="16"/></svg></div>
    <div><svg viewBox="0 0 64 55"><rect y="6" width="64" height="41" fill="#f3f2ee"/><rect y="6" width="64" height="8" fill="#dcdcda"/><rect x="5" y="20" width="38" height="18" fill="#dcdcbc"/><path d="M5 18h30M5 22h30M5 26h30M5 41h30" stroke="#8c8c86" stroke-dasharray="3 1"/><path d="M32 16v26M38 14v30M46 14v26M54 14v26" stroke="#b88a8a" stroke-dasharray="2 2"/><rect x="42" y="39" width="20" height="19" rx="4" fill="#fff"/><use href="#excel" x="43.500" y="40" width="16" height="16"/></svg></div>
    <div><svg viewBox="0 0 64 55"><rect y="6" width="64" height="41" fill="#fdfdfd"/><rect y="6" width="64" height="8" fill="#dcdcda"/><path d="M20 18h26M20 21h26M16 27h36M16 30h36M16 33h22M16 37h16" stroke="#77777b" stroke-width="1.200" stroke-dasharray="4 1"/><rect x="42" y="39" width="20" height="19" rx="4" fill="#fff"/><use href="#word" x="43.500" y="40" width="16" height="16"/></svg></div>
    <div><svg viewBox="0 0 64 55"><rect y="3" width="64" height="48" fill="#fafbfc"/><path d="M0 3h64v4H0Z" fill="#b79cba"/><path d="M0 7h64v3H0Z" fill="#cfd0b4"/><path d="M3 15h50M3 20h8M3 25h10" stroke="#c9cad0"/><path d="M4 32h16M4 36h16" stroke="#ecd0d0" stroke-width="3" stroke-dasharray="2 1"/><path d="M20 30v9" stroke="#3c9a4c" stroke-width="2"/><rect x="42" y="39" width="20" height="19" rx="4" fill="#fff"/><rect x="45" y="41" width="14" height="15" rx="1.500" fill="#3f3f40"/><text x="52" y="52" class="tiny">B</text></svg></div>
    <div><svg class="bin" viewBox="0 0 50 64"><path d="M2 12 8 56c1 9 33 9 34 0l6-44Z" fill="#e4e4e3"/><path d="M12 20l4 38M22 20l1 42M34 20l-3 42" stroke="#d4d4d3" stroke-width="2"/><ellipse cx="25" cy="12" rx="24" ry="5.500" fill="#b9bbbb"/><path d="m5 11 5-7 7 4 5-8 8 5 7-5 3 7 5 2-6 6-8-3-7 5-8-5-7 3Z" fill="#f6f6f5"/><path d="m12 6 4 5-4 2ZM32 5l5 4-6 4Z" fill="#555"/><path d="m21 7 4-3 1 5Z" fill="#37a0a0"/><path d="m27 10 5-1-2 4Z" fill="#d2603c"/></svg></div>
  </div>
</footer>
</body>
</html>
```

FILE: styles.css
```css
* { box-sizing: border-box; margin: 0; padding: 0; }
body {
  width: 3024px; height: 1964px; overflow: hidden;
  display: flex; flex-direction: column;
  font-family: Inter, "Liberation Sans", sans-serif;
  color: #424242;
  background:
    radial-gradient(ellipse 140px 60px at 2750px 1950px, #6b4a2f 0, transparent 100%),
    radial-gradient(ellipse 60px 40px at 20px 1920px, #39491f 0, transparent 100%),
    radial-gradient(ellipse 300px 60px at 1330px 1960px, #33271a 0, transparent 100%),
    linear-gradient(90deg, #141c17, #1c2a1c 20%, #15130f 38%, #19191a 55%, #1d2a20 75%, #131516);
}
svg { display: block; overflow: visible; }
.sprite { position: absolute; }
em { font-style: normal; }
.ic { width: 32px; height: 32px; fill: none; stroke: currentColor; stroke-width: 2; flex: none; }
.solid { fill: currentColor; stroke: none; }
.glyph { fill: #fff; font: 700 15px Inter, sans-serif; text-anchor: middle; stroke: none; }

/* Menu bar */
.menubar {
  height: 74px; margin-bottom: 2px; flex: none;
  display: grid; grid-template-columns: 67px 1979px 654px 1fr; align-items: center;
  padding-left: 41px; color: #fff; font-size: 26px; font-weight: 500;
  background: linear-gradient(90deg, #403f33, #424035 40%, #404433 65%, #444535 75%, #3a3d33);
  text-shadow: 0 2px 5px rgba(0,0,0,.35);
}
.apple { width: 26px; height: 32px; margin-top: -5px; }
.menus { display: grid; grid-template-columns: 142px 84px 88px 100px 150px 126px 133px 105px 138px 90px; letter-spacing: -.35px; margin-top: -2px; }
.menus b { font-weight: 700; letter-spacing: -.1px; }
.status { display: grid; grid-template-columns: 76px 70px 65px 92px 77px 70px 66px 65px 50px; align-items: center; padding-left: 12px; }
.status svg { width: 32px; height: 32px; }
.status .batt { width: 50px; }
.status .wifi { width: 34px; }
.menubar time { white-space: nowrap; letter-spacing: -.05px; margin-top: -2px; }

/* Window */
.window {
  position: relative; height: 1776px; flex: none; overflow: hidden;
  border-radius: 20px 20px 22px 22px; background: #e0e0df;
  display: grid; grid-template-columns: 100px 472px 800px 1620px;
  grid-template-rows: 104px 104px 1fr; column-gap: 0;
}
.window::after {
  content: ""; position: absolute; left: 0; right: 0; bottom: 0; height: 110px; pointer-events: none;
  background: linear-gradient(transparent, rgba(0,0,0,.03) 50%, rgba(0,0,0,.12));
}
.titlebar {
  grid-column: 1 / -1; width: 3024px; background: #3476cd; border-top: 1px solid #7ba6df;
  display: grid; grid-template-columns: 907px 1210px 1fr; align-items: center; color: #fff;
}
.lights { display: flex; gap: 16px; padding-left: 22px; }
.lights i { width: 24px; height: 24px; border-radius: 50%; background: #ed6b60; }
.lights i:nth-child(2) { background: #f5bf50; }
.lights i:nth-child(3) { background: #62c655; }
.search { height: 72px; background: #285ea5; border-radius: 14px; display: flex; align-items: center; justify-content: center; gap: 8px; font-size: 26px; font-weight: 500; letter-spacing: -.2px; padding: 0 0 1px 3px; }
.search svg, .tb-icons svg { fill: none; stroke: #fff; stroke-width: 2; width: 32px; height: 32px; }
.tb-icons { display: flex; justify-content: flex-end; gap: 31px; padding-right: 24px; }

/* Account and app rail */
.rail { grid-row: 2 / 4; background: #e6e6e5; display: flex; flex-direction: column; align-items: center; padding-top: 16px; }
.pill { width: 72px; height: 220px; border-radius: 36px; background: #f8f8f6; display: flex; flex-direction: column; align-items: center; padding-top: 8px; box-shadow: 0 2px 10px rgba(0,0,0,.08); }
.acct { position: relative; width: 57px; height: 57px; border-radius: 50%; display: grid; place-items: center; }
.acct.on { background: #bdd3f0; }
.globe { width: 32px; height: 32px; }
.work { color: #bf4e50; margin: 15px 0 18px; }
.work i { position: absolute; left: 40px; top: -2px; width: 16px; height: 16px; border-radius: 50%; background: #bf4e50; }
.plus { border: 2px solid #dcdcdb; }
.app { width: 72px; height: 72px; border-radius: 50%; display: grid; place-items: center; margin-bottom: 16px; }
.app.on { background: #f8f8f6; margin-top: 16px; }
.mailic { width: 32px; height: 28px; margin-top: 2px; }
.ppl { width: 34px; }

/* Toolbar */
.toolbar {
  grid-column: 2 / 5; display: grid; align-items: center; padding-left: 32px; font-size: 28px;
  grid-template-columns: 64px 396px 198px 211px 188px 205px 320px 178px 186px 228px 210px 216px 172px 63px 40px;
}
.new { width: 274px; height: 80px; border: 0; border-radius: 14px; background: #3476cd; color: #fff; font: 600 29.500px Inter, sans-serif; letter-spacing: -.2px; display: flex; align-items: center; padding-left: 37px; gap: 19px; }
.new .ic { stroke-width: 2.500; }
.cmd { display: flex; align-items: center; gap: 20px; white-space: nowrap; letter-spacing: -.2px; padding-top: 1px; }
.cmd .wide { width: 36px; height: 34px; margin-right: -3px; }
.sync { height: 38px; }
.flag .ic:first-child { margin-right: -3px; }
.flag .chev { margin-left: 4px; }
.cop { font-weight: 500; gap: 18px; }
.flag { font-weight: 500; }
.copilot { width: 37px; height: 33px; }

/* Folder list */
.folders { grid-column: 2; overflow: hidden; font-size: 24px; padding: 0 12px; }
.cut { height: 15px; margin: 0 338px 0 86px; background: linear-gradient(#424242 2px, transparent 2px); }
.folders a { height: 56px; display: flex; align-items: center; padding: 0 22px 0 82px; border-radius: 14px; }
.folders span { margin-left: 24px; padding-top: 2px; white-space: nowrap; letter-spacing: .05px; }
.folders b { margin-left: auto; color: #2c6aa0; font-weight: 600; font-size: 23px; }
.folders .j { width: 34px; height: 34px; margin-right: -2px; margin-top: 2px; }
.folders .group { padding-left: 33px; }
.folders .group svg + svg { margin-left: 17px; width: 34px; margin-right: -2px; }
.folders h3 { height: 99px; display: flex; align-items: center; padding: 33px 0 0 17px; gap: 16px; color: #111; font-size: 30px; font-weight: 600; letter-spacing: -.25px; white-space: nowrap; }
.folders h3.second { height: 100px; letter-spacing: -.45px; }
.folders h3 .ic { color: #424242; }
.folders .sel { background: #f0f5fc; color: #2c6aa0; }
.folders .sel span { font-weight: 600; }

/* Message list */
.list { background: #fff; border-radius: 16px 16px 0 0; overflow: hidden; }
.list header { height: 102px; display: flex; align-items: center; justify-content: space-between; padding: 0 32px 0 28px; }
.list h2, .subj h2 { font-size: 30px; font-weight: 600; color: #242424; letter-spacing: -.3px; }
.day { height: 58px; padding-left: 28px; line-height: 60px; font-size: 24px; letter-spacing: -.2px; color: #616161; }
article { height: 102px; border-bottom: 2px solid #e1e1e1; display: grid; grid-template-columns: 68px 92px 1fr auto; grid-template-rows: 53px 34px; padding: 7px 31px 0 0; align-items: center; }
article i { grid-column: 1; grid-row: 1 / 3; justify-self: center; margin-left: 12px; width: 16px; height: 16px; border-radius: 50%; background: #3476cd; }
.av { width: 80px; height: 80px; border-radius: 50%; display: grid; place-items: center; color: #fff; font-size: 33px; letter-spacing: -1px; }
article .av { grid-column: 2; grid-row: 1 / 3; margin-top: -3px; }
article h4 { grid-column: 3; grid-row: 1; font-size: 30px; font-weight: 600; color: #111; letter-spacing: -.35px; white-space: nowrap; }
article p { grid-column: 3; grid-row: 2; font-size: 26px; font-weight: 600; color: #3476cd; letter-spacing: -.06px; white-space: nowrap; margin-top: -8px; }
article time { grid-column: 4; grid-row: 2; font-size: 22.500px; font-weight: 600; color: #3476cd; letter-spacing: -.2px; margin-top: -8px; }
article .clip { grid-column: 4; grid-row: 1; justify-self: end; width: 28px; height: 32px; margin-right: 5px; stroke-width: 1.800; }
.read { background: #f0f4fb; }
.read h4, .read p { font-weight: 400; color: #111; }
.read time { font-weight: 400; color: #424242; }
.cup { display: inline-block; width: 34px; height: 26px; vertical-align: -3px; }
.dark { background: #383838; } .pink { background: #b146ad; } .maroon { background: #963033; }
.violet { background: #5a2e8c; } .red { background: #c53f3f; } .green { background: #4e7d22; }
.indigo { background: #566ae4; } .navy { background: #1f4d87; } .grey { background: #6a787d; }

/* Reading pane */
.reader { margin-left: 16px; width: 1620px; background: #fff; border-radius: 16px 16px 0 0; overflow: hidden; display: flex; flex-direction: column; }
.subj { height: 104px; flex: none; display: flex; align-items: center; padding: 0 50px 0 41px; gap: 32px; }
.subj h2 { color: #111; margin-right: auto; }
.meta { height: 148px; flex: none; display: flex; padding: 0 52px 0 48px; }
.big { width: 96px; height: 96px; font-size: 37px; }
.who { margin: 1px 0 0 36px; flex: 1; }
.who i { width: 20px; height: 20px; border: 5px solid #8c8c8c; border-radius: 50%; }
.from, .to { display: flex; align-items: center; }
.from { height: 42px; gap: 10px; font-size: 30px; font-weight: 600; color: #242424; letter-spacing: -.27px; }
.to { height: 66px; font-size: 24px; }
.to b { font-weight: 600; font-size: 25px; color: #111; width: 66px; }
.to i { margin-right: 11px; }
.meta time { font-size: 24px; color: #777; padding-top: 1px; }
.shot { margin-left: 50px; width: 1490px; height: 1214px; flex: none; background: #f8fafc; border-bottom: 4px solid #e3e5ea; overflow: hidden; padding-left: 55px; }
.page { width: 1380px; height: 1214px; background: #f7f7f7; border: 3px solid #e3e9ef; border-width: 0 3px; padding: 0 84px; }
.player { height: 261px; display: flex; justify-content: space-between; color: #505866; padding-top: 53px; }
.player p { font-size: 42px; line-height: 64px; }
.player h1 { font-size: 55.500px; font-weight: 600; color: #10182b; line-height: 72px; letter-spacing: -.2px; }
.player p b { font-weight: 500; }
.round { text-align: right; margin-top: -32px; }
.round h5 { font-size: 48.600px; font-weight: 500; color: #14171c; line-height: 64px; }
.round .date { line-height: 58px; color: #6b7380; }
.card { width: 1206px; height: 1000px; border: 4px solid #e2e8ee; border-radius: 66px 66px 0 0; background: #f9fafc; padding: 51px 0 0 82px; }
.row { display: grid; grid-template-columns: 166px repeat(9, 82px) 137px; column-gap: 8.100px; width: 1140px; font: 41px "DejaVu Sans Mono", "Liberation Mono", monospace; color: #505866; text-align: center; }
.row span { height: 90px; line-height: 84px; border: 4px solid transparent; border-radius: 13px; }
.hole { margin-bottom: 11px; }
.row.two { margin-top: 24px; margin-bottom: 12px; }
.par { margin-bottom: 7px; color: #14171c; }
.par span { background: #f2f3f5; border-color: #e3e9ee; }
.par span:first-child { color: #505866; }
.score { font-weight: 700; color: #101114; }
.score span { background: #fff; border-color: #e3e9ee; }
.score span:first-child { background: #f9fafc; font-weight: 400; color: #505866; }
.score .o { background: #fcf2f1; color: #ad2c28; }
.score .u { background: #f3fdf4; color: #3a7f43; }
.score .t { background: #429149; background-clip: padding-box; color: #fff; border-radius: 13px; }
.stats { display: grid; grid-template-columns: repeat(4, 269px); margin: 28px 0 0 -22px; text-align: center; font-size: 55px; line-height: 83px; color: #505866; }
.stats b { display: block; color: #101114; font-weight: 700; }
.net b { color: #4aa2e2; } .over b { color: #dfb53f; } .dth b { color: #8038de; }
.tabs { margin: 78px 0 0 106px; height: 8px; overflow: hidden; display: grid; grid-template-columns: 281px 253px 371px 259px 220px; font-size: 40px; font-weight: 600; color: #1c2433; line-height: 33px; }

/* Edge of the window underneath */
.behind { height: 4px; flex: none; margin-bottom: 8px; overflow: hidden; background: #939395; border-radius: 0 0 20px 20px; display: grid; grid-template-columns: 466px 466px 443px 456px 1fr; padding-left: 268px; font-size: 25px; font-weight: 600; color: #262c3d; line-height: 30px; }
.behind span { margin-top: -21px; }

/* Dock */
.dock {
  height: 90px; flex: none; margin: 0 55px; border-radius: 30px; border: 2px solid rgba(170,180,172,.65);
  display: flex; padding-left: 3px;
  background: linear-gradient(90deg, #58655d, #5f7063 12%, #627163 22%, #626662 32%, #65625f 36%, #736a5f 45%, #66685f 54%, #5f6f64 60%, #68746b 70%, #657862 78%, #69695c 86%, #826d59 92%, #5c5d5a 98%);
}
.dock hr { width: 2px; height: 66px; border: 0; background: #3c4440; margin: 10px 12px 0 16px; }
.dock hr + .apps { margin-left: 1px; }
.apps { display: flex; }
.apps > div { position: relative; width: 72.800px; display: flex; justify-content: center; padding-top: 13px; }
.apps svg { width: 55px; height: 55px; flex: none; }
.run::after { content: ""; position: absolute; bottom: 1px; left: 32.400px; width: 8px; height: 8px; border-radius: 50%; background: #050505; }
.badge { position: absolute; left: 45px; top: 7px; width: 26px; height: 26px; border-radius: 50%; background: #e5503f; color: #fff; font-size: 18px; font-weight: 500; display: grid; place-items: center; }
.apps .vm { width: 67px; height: 67px; margin-top: -6px; }
.apps .su { width: 60px; height: 62px; margin-top: -4px; }
.apps .cad { width: 68px; height: 68px; margin-top: -6px; }
.apps .sk { width: 60px; height: 62px; margin-top: -4px; }
.apps .bin { width: 50px; height: 64px; margin-top: -6px; }
.minis svg { width: 64px; }
.tv { fill: #fff; font: 600 21px Inter, sans-serif; text-anchor: middle; }
.mon { fill: #fff; font: 600 10px Inter, sans-serif; text-anchor: middle; }
.num { fill: #2b2b2b; font: 300 32px Inter, sans-serif; text-anchor: middle; letter-spacing: -1px; }
.bb { font-size: 20px; font-weight: 500; }
.tiny { fill: #fff; font: 500 10px Inter, sans-serif; text-anchor: middle; }
```
